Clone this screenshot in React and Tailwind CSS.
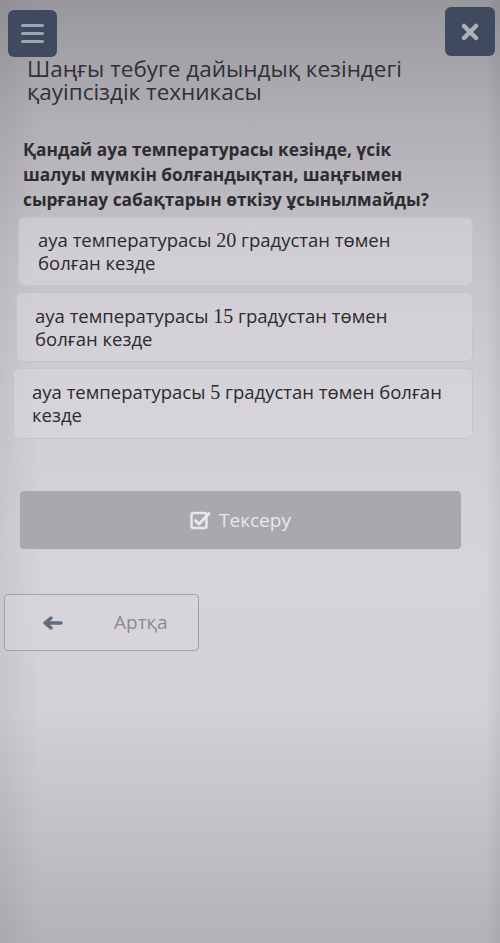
import React from "react";

function Option({ pre, num, post, className = "" }) {
  return (
    <div className={"rounded-[6px] border border-[#c6c4c9] bg-[#dcdadf]/50 text-[18.5px] leading-[23px] text-[#2a2a2f] " + className}>
      {pre}
      <span className="font-['Liberation_Serif',serif] text-[20px] leading-none">{num}</span>
      {post}
    </div>
  );
}

export default function App() {
  return (
    <div className="min-h-[943px] w-[500px] overflow-hidden font-['Open_Sans',sans-serif] bg-[linear-gradient(180deg,#99979e_0%,#b0aeb4_12%,#c6c4c9_28%,#d0ced3_42%,#d6d4d9_60%,#d3d1d6_75%,#c4c1c6_88%,#b5b2b7_100%)]">
      <div className="flex min-h-[943px] w-[500px] flex-col bg-[linear-gradient(90deg,rgba(0,0,0,0.06)_0%,rgba(0,0,0,0)_8%,rgba(0,0,0,0)_97%,rgba(0,0,0,0.06)_100%)]">
        <div className="flex items-start justify-between pt-[8px]">
          <div className="ml-[8px] mt-[2px] flex h-[47px] w-[49px] flex-col items-center justify-center gap-[5px] rounded-[6px] bg-[#3f4a5e]">
            <div className="h-[3px] w-[23px] rounded-full bg-[#9ea6b4]" />
            <div className="h-[3px] w-[23px] rounded-full bg-[#9ea6b4]" />
            <div className="h-[3px] w-[23px] rounded-full bg-[#9ea6b4]" />
          </div>
          <div className="mr-[5px] mt-[-1px] flex h-[49px] w-[50px] items-center justify-center rounded-[6px] bg-[#3f4a5e]">
            <svg width="18" height="18" viewBox="0 0 18 18">
              <path d="M3 3 L15 15 M15 3 L3 15" stroke="#aab0bb" strokeWidth="4.5" strokeLinecap="round" />
            </svg>
          </div>
        </div>

        <div className="ml-[27px] mt-[0px] text-[22.5px] leading-[23px] text-[#303035]">
          Шаңғы тебуге дайындық кезіндегі
          <br />
          қауіпсіздік техникасы
        </div>

        <div className="ml-[23px] mt-[34px] text-[17.3px] font-bold leading-[25px] text-[#2c2c31]">
          Қандай ауа температурасы кезінде, үсік
          <br />
          шалуы мүмкін болғандықтан, шаңғымен
          <br />
          сырғанау сабақтарын өткізу ұсынылмайды?
        </div>

        <div className="mt-[5px] flex flex-col gap-[6px]">
          <Option
            className="ml-[18px] mr-[27px] h-[69px] pl-[19px] pt-[10px]"
            pre="ауа температурасы "
            num="20"
            post={<> градустан төмен<br />болған кезде</>}
          />
          <Option
            className="ml-[16px] mr-[27px] h-[70px] pl-[18px] pt-[11px]"
            pre="ауа температурасы "
            num="15"
            post={<> градустан төмен<br />болған кезде</>}
          />
          <Option
            className="ml-[13px] mr-[27px] h-[71px] pl-[18px] pt-[11px]"
            pre="ауа температурасы "
            num="5"
            post={<> градустан төмен болған<br />кезде</>}
          />
        </div>

        <div className="ml-[20px] mr-[39px] mt-[52px] flex h-[58px] items-center justify-center gap-[7px] rounded-[4px] bg-[#a9a8ae] text-[19px] text-[#e8e8ec]">
          <svg width="22" height="20" viewBox="0 0 22 20">
            <rect x="1.5" y="3" width="15" height="15" rx="2" fill="none" stroke="#e8e8ec" strokeWidth="2.5" />
            <path d="M5.5 10.5 L9 14 L19 3.5" fill="none" stroke="#e8e8ec" strokeWidth="3" strokeLinecap="round" strokeLinejoin="round" />
          </svg>
          <span>Тексеру</span>
        </div>

        <div className="ml-[4px] mt-[45px] flex h-[57px] w-[195px] items-center rounded-[4px] border border-[#a3a1a6] bg-[#dcdadf]/40 text-[19px] text-[#8a898f]">
          <svg className="ml-[37px]" width="21" height="14" viewBox="0 0 21 14">
            <path d="M19 7 H7 M9 2 L3 7 L9 12" fill="none" stroke="#5f6e80" strokeWidth="3.5" strokeLinecap="round" strokeLinejoin="round" />
          </svg>
          <span className="ml-[51px]">Артқа</span>
        </div>
      </div>
    </div>
  );
}
